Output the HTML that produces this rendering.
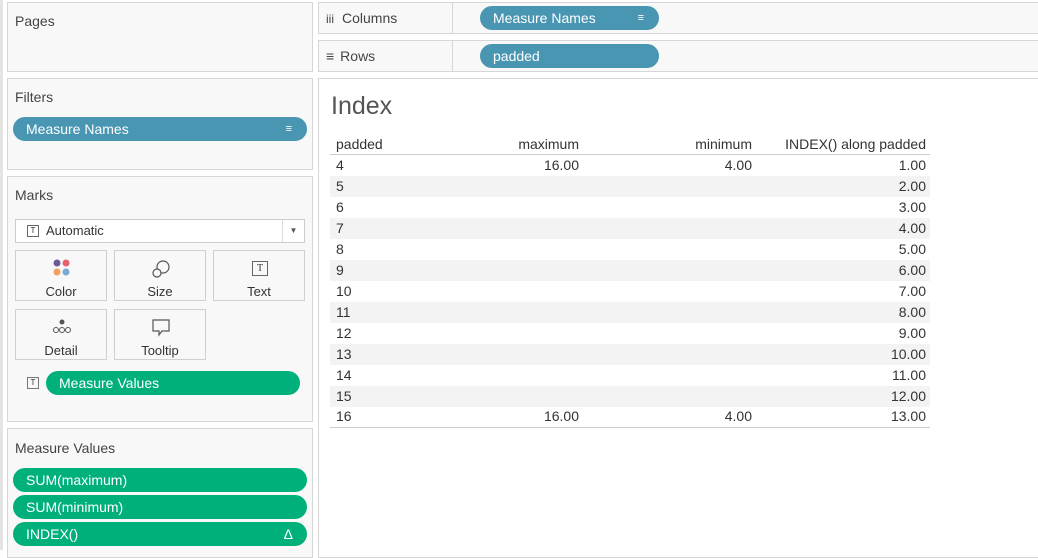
<!DOCTYPE html><html><head><style>
*{box-sizing:border-box;margin:0;padding:0}
body{width:1038px;height:550px;background:#fff;font-family:"Liberation Sans",sans-serif;position:relative;overflow:hidden;color:#333}
.b{position:absolute;background:#f8f8f8;border:1px solid #d6d6d6}
.t{position:absolute;font-size:14px;color:#444}
.pill{position:absolute;height:24px;border-radius:12px;color:#fff;font-size:14px;line-height:24px;padding-left:13px}
.blue{background:#4996b2}.green{background:#00b07b}
.btn{position:absolute;width:92px;height:51px;border:1px solid #d0d0d0;background:#f8f8f8;font-size:13px;text-align:center;color:#333}
.btn span{position:absolute;left:0;right:0;top:33px}
.row{position:absolute;left:330px;width:600px;height:21px;font-size:14px;line-height:21px;color:#333}
.row div{position:absolute;top:0}
.c1{left:6px}.c2{right:351px}.c3{right:178px}.c4{right:4px}
.s{background:#f3f3f3}
</style></head><body>
<div style="position:absolute;left:0;top:0;width:3px;height:550px;background:#e4e4e4"></div>
<div class="b" style="left:7px;top:2px;width:306px;height:70px"></div><div class="t" style="left:15px;top:13px">Pages</div>
<div class="b" style="left:7px;top:78px;width:306px;height:92px"></div><div class="t" style="left:15px;top:89px">Filters</div>
<div class="pill blue" style="left:13px;top:117px;width:294px">Measure Names<span style="position:absolute;right:15px;font-size:11px">&#x2261;</span></div>
<div class="b" style="left:7px;top:176px;width:306px;height:246px"></div><div class="t" style="left:15px;top:187px">Marks</div>
<div style="position:absolute;left:15px;top:219px;width:290px;height:24px;border:1px solid #ccc;background:#fff;font-size:13px;line-height:22px;padding-left:30px">Automatic<span style="position:absolute;left:11px;top:5px;width:12px;height:12px;border:1px solid #666;font-size:8px;line-height:10px;text-align:center">T</span><span style="position:absolute;right:0;top:0;width:22px;height:22px;border-left:1px solid #ddd;font-size:8px;text-align:center;color:#555">&#9660;</span></div>
<div class="btn" style="left:15px;top:250px"><svg style="position:absolute;left:37px;top:8px" width="18" height="18"><circle cx="4" cy="4" r="3.5" fill="#6b5b95"/><circle cx="13" cy="4" r="3.5" fill="#e8606a"/><circle cx="4" cy="13" r="3.5" fill="#f0a060"/><circle cx="13" cy="13" r="3.5" fill="#7ba7d0"/></svg><span>Color</span></div>
<div class="btn" style="left:114px;top:250px"><svg style="position:absolute;left:36px;top:8px" width="20" height="20"><circle cx="12" cy="8" r="6" fill="none" stroke="#555" stroke-width="1.2"/><circle cx="6" cy="14" r="4" fill="#f8f8f8" stroke="#555" stroke-width="1.2"/></svg><span>Size</span></div>
<div class="btn" style="left:213px;top:250px"><div style="position:absolute;left:38px;top:10px;width:16px;height:15px;border:1px solid #666;font-size:10px;line-height:13px;font-family:'Liberation Serif',serif">T</div><span>Text</span></div>
<div class="btn" style="left:15px;top:309px"><svg style="position:absolute;left:36px;top:9px" width="20" height="16"><circle cx="10" cy="3" r="2.5" fill="#555"/><circle cx="4" cy="11" r="2.5" fill="none" stroke="#555"/><circle cx="10" cy="11" r="2.5" fill="none" stroke="#555"/><circle cx="16" cy="11" r="2.5" fill="none" stroke="#555"/></svg><span>Detail</span></div>
<div class="btn" style="left:114px;top:309px"><svg style="position:absolute;left:36px;top:8px" width="20" height="20"><path d="M2 2H18V13H11L8 17V13H2Z" fill="none" stroke="#555" stroke-width="1.2"/></svg><span>Tooltip</span></div>
<div style="position:absolute;left:27px;top:377px;width:12px;height:12px;border:1px solid #777;font-size:8px;line-height:10px;text-align:center">T</div>
<div class="pill green" style="left:46px;top:371px;width:254px">Measure Values</div>
<div class="b" style="left:7px;top:428px;width:306px;height:130px"></div><div class="t" style="left:15px;top:440px">Measure Values</div>
<div class="pill green" style="left:13px;top:468px;width:294px">SUM(maximum)</div>
<div class="pill green" style="left:13px;top:495px;width:294px">SUM(minimum)</div>
<div class="pill green" style="left:13px;top:522px;width:294px">INDEX()<span style="position:absolute;right:14px">&#916;</span></div>
<div class="b" style="left:318px;top:2px;width:730px;height:32px"></div><div style="position:absolute;left:452px;top:3px;width:1px;height:30px;background:#d6d6d6"></div>
<div class="t" style="left:326px;top:10px"><b style="font-weight:normal;font-size:12px;margin-right:8px">iii</b>Columns</div>
<div class="pill blue" style="left:480px;top:6px;width:179px">Measure Names<span style="position:absolute;right:15px;font-size:11px">&#x2261;</span></div>
<div class="b" style="left:318px;top:40px;width:730px;height:32px"></div><div style="position:absolute;left:452px;top:41px;width:1px;height:30px;background:#d6d6d6"></div>
<div class="t" style="left:326px;top:48px"><span style="margin-right:6px">&#8801;</span>Rows</div>
<div class="pill blue" style="left:480px;top:44px;width:179px">padded</div>
<div style="position:absolute;left:318px;top:78px;width:730px;height:480px;border:1px solid #d6d6d6;background:#fff"></div>
<div style="position:absolute;left:331px;top:92px;font-size:25px;color:#555">Index</div>
<div class="row" style="top:134px"><div class="c1">padded</div><div class="c2">maximum</div><div class="c3">minimum</div><div class="c4">INDEX() along padded</div></div>
<div style="position:absolute;left:330px;top:154px;width:600px;height:1px;background:#ccc"></div>
<div class="row" style="top:155px"><div class="c1">4</div><div class="c2">16.00</div><div class="c3">4.00</div><div class="c4">1.00</div></div>
<div class="row s" style="top:176px"><div class="c1">5</div><div class="c4">2.00</div></div>
<div class="row" style="top:197px"><div class="c1">6</div><div class="c4">3.00</div></div>
<div class="row s" style="top:218px"><div class="c1">7</div><div class="c4">4.00</div></div>
<div class="row" style="top:239px"><div class="c1">8</div><div class="c4">5.00</div></div>
<div class="row s" style="top:260px"><div class="c1">9</div><div class="c4">6.00</div></div>
<div class="row" style="top:281px"><div class="c1">10</div><div class="c4">7.00</div></div>
<div class="row s" style="top:302px"><div class="c1">11</div><div class="c4">8.00</div></div>
<div class="row" style="top:323px"><div class="c1">12</div><div class="c4">9.00</div></div>
<div class="row s" style="top:344px"><div class="c1">13</div><div class="c4">10.00</div></div>
<div class="row" style="top:365px"><div class="c1">14</div><div class="c4">11.00</div></div>
<div class="row s" style="top:386px"><div class="c1">15</div><div class="c4">12.00</div></div>
<div class="row" style="top:406px"><div class="c1">16</div><div class="c2">16.00</div><div class="c3">4.00</div><div class="c4">13.00</div></div>
<div style="position:absolute;left:330px;top:427px;width:600px;height:1px;background:#ccc"></div>
</body></html>
